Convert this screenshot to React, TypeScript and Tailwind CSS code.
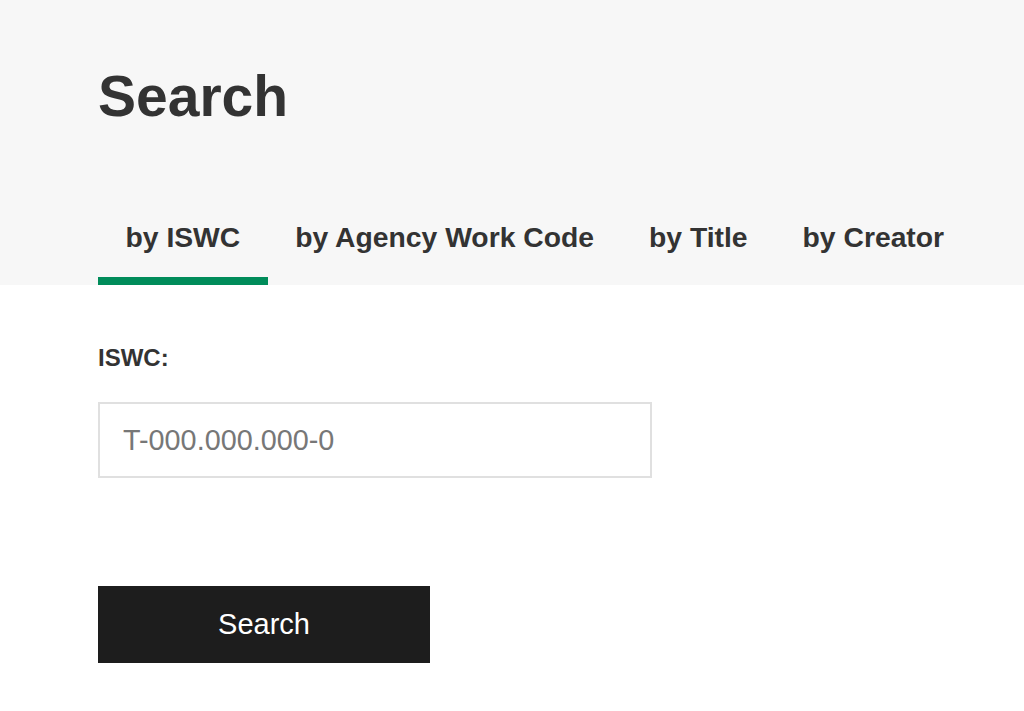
import React from "react";

const tabs = ["by ISWC", "by Agency Work Code", "by Title", "by Creator"];

export default function App() {
  return (
    <div className="min-h-[711px] bg-white font-['Liberation_Sans',Arial,sans-serif] text-[#333]">
      <header className="bg-[#f7f7f7] px-[98px] pt-[68px]">
        <h1 className="text-[57px] leading-[56px] font-bold">Search</h1>
        <nav className="mt-[99px] flex">
          {tabs.map((t, i) => (
            <button
              key={t}
              className={
                "shrink-0 whitespace-nowrap px-[27.5px] pb-[26px] text-[28.3px] leading-[28px] font-bold border-b-8 " +
                (i === 0 ? "border-[#008c5a]" : "border-transparent")
              }
            >
              {t}
            </button>
          ))}
        </nav>
      </header>
      <main className="px-[98px]">
        <label className="mt-[61px] block text-[24px] leading-[24px] font-bold" htmlFor="iswc">
          ISWC:
        </label>
        <input
          id="iswc"
          placeholder="T-000.000.000-0"
          className="mt-[32px] block h-[76px] w-[554px] border-2 border-[#e0e0e0] bg-white pl-[23px] text-[28.8px] text-[#333] placeholder:text-[#777] outline-none"
        />
        <button className="mt-[108px] block h-[77px] w-[332px] bg-[#1d1d1d] text-[29px] text-white">
          Search
        </button>
      </main>
    </div>
  );
}
